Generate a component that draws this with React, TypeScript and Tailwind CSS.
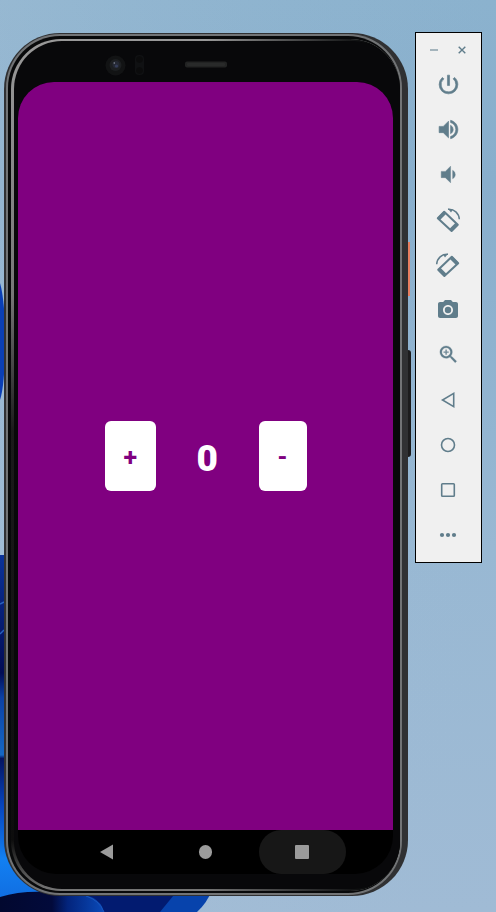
import React from "react";
import { MdPowerSettingsNew, MdVolumeUp, MdVolumeDown, MdCameraAlt, MdZoomIn } from "react-icons/md";

function Wallpaper() {
  return (
    <svg className="absolute inset-0 h-full w-full" viewBox="0 0 496 912" preserveAspectRatio="none">
      <defs>
        <linearGradient id="sky" x1="0" y1="0" x2="0" y2="1">
          <stop offset="0" stopColor="#8bb2ce" />
          <stop offset="0.2" stopColor="#88aecc" />
          <stop offset="0.6" stopColor="#98b8d3" />
          <stop offset="1" stopColor="#a0bbd5" />
        </linearGradient>
        <linearGradient id="glow" x1="0" y1="0" x2="1" y2="0">
          <stop offset="0" stopColor="#b9cbdc" stopOpacity="0.25" />
          <stop offset="1" stopColor="#9bbad4" stopOpacity="0" />
        </linearGradient>
        <linearGradient id="petal" x1="0" y1="555" x2="0" y2="912" gradientUnits="userSpaceOnUse">
          <stop offset="0" stopColor="#0a3399" />
          <stop offset="0.33" stopColor="#020c55" />
          <stop offset="0.4" stopColor="#0b41a4" />
          <stop offset="0.56" stopColor="#1468c4" />
          <stop offset="0.57" stopColor="#031460" />
          <stop offset="0.7" stopColor="#0644bd" />
          <stop offset="0.85" stopColor="#1280f2" />
          <stop offset="1" stopColor="#1068dc" />
        </linearGradient>
        <linearGradient id="fold" x1="0" y1="0" x2="1" y2="0">
          <stop offset="0" stopColor="#02082f" />
          <stop offset="0.5" stopColor="#020a3b" />
          <stop offset="0.65" stopColor="#03247c" />
          <stop offset="1" stopColor="#0a4ab9" />
        </linearGradient>
      </defs>
      <rect width="496" height="912" fill="url(#sky)" />
      <rect width="496" height="912" fill="url(#glow)" />
      <path d="M0 283 Q5 300 5 340 Q5 385 0 400Z" fill="#0a3fb5" />
      <path d="M0 555H5V820L60 890V912H0Z" fill="url(#petal)" />
      <path d="M0 604 L4 602M0 634 L4 630" stroke="#2961bf" strokeWidth="1.5" />
      <path d="M50 890H212Q207 903 197 912H50Z" fill="#0743ac" />
      <path d="M50 890H178L160 912H50Z" fill="#021b70" />
      <path d="M0 897Q25 889 60 893Q99 891 104 912H0Z" fill="url(#fold)" />
      <path d="M86 896Q99 900 104 912" fill="none" stroke="#1857bd" />
    </svg>
  );
}

function RotateIcon({ mirrored = false }: { mirrored?: boolean }) {
  return (
    <svg width="26" height="26" viewBox="0 0 26 26" className={mirrored ? "-scale-x-100" : ""}>
      <path d="M2.8 11.2 9.2 4.8 22.8 17.8 16.6 24Z" fill="none" stroke="#607d8b" strokeWidth="2" strokeLinejoin="round" />
      <path d="M3.8 11.8 9.8 5.8M16 22.8 21.8 17" stroke="#607d8b" strokeWidth="3.4" />
      <path d="M13 2.3C19.2 1.8 24 6.3 24.3 12.3" fill="none" stroke="#607d8b" strokeWidth="1.5" />
      <path d="m13 1.7 5 .8-2 3Z" fill="#607d8b" />
    </svg>
  );
}

const tools = [
  <MdPowerSettingsNew size={25} stroke="currentColor" strokeWidth={0.6} className="[&>path[fill=none]]:hidden" />,
  <MdVolumeUp size={25} stroke="currentColor" strokeWidth={0.6} className="[&>path[fill=none]]:hidden" />,
  <MdVolumeDown size={25} stroke="currentColor" strokeWidth={0.4} className="[&>path[fill=none]]:hidden" />,
  <RotateIcon />,
  <RotateIcon mirrored />,
  <MdCameraAlt size={24} />,
  <MdZoomIn size={23} stroke="currentColor" strokeWidth={0.3} className="[&>path[fill=none]]:hidden" />,
  <svg width="20" height="20" viewBox="0 0 20 20"><path d="M15.7 3.3v13.4L4.5 10Z" fill="none" stroke="#607d8b" strokeWidth="1.6" /></svg>,
  <svg width="20" height="20" viewBox="0 0 20 20"><circle cx="10" cy="10" r="6.5" fill="none" stroke="#607d8b" strokeWidth="1.6" /></svg>,
  <svg width="20" height="20" viewBox="0 0 20 20"><rect x="3.7" y="3.7" width="12.6" height="12.6" rx="0.8" fill="none" stroke="#607d8b" strokeWidth="1.6" /></svg>,
  <svg width="20" height="20" viewBox="0 0 20 20" fill="#607d8b"><circle cx="4" cy="10" r="2.1" /><circle cx="10" cy="10" r="2.1" /><circle cx="16" cy="10" r="2.1" /></svg>,
];

function Toolbar() {
  return (
    <aside className="ml-[8px] flex h-[531px] w-[67px] flex-col border border-black bg-[#f0f0f0] text-[#607d8b]">
      <div className="flex h-[29px] items-center pt-[5px]">
        <span className="ml-[14px] h-[2px] w-[8px] bg-[#a4b4bc]" />
        <svg className="ml-[20px]" width="8" height="8" viewBox="0 0 8 8"><path d="m.7.7 6.6 6.6M7.3.7.7 7.3" stroke="#607d8b" strokeWidth="1.4" /></svg>
      </div>
      {tools.map((icon, i) => (
        <div key={i} className="flex h-[45px] shrink-0 items-center justify-center pr-[1px]">{icon}</div>
      ))}
    </aside>
  );
}

function Camera() {
  return (
    <div className="flex h-[50px] w-full">
      <svg width="404" height="50" viewBox="3 32 404 50">
        <circle cx="115.5" cy="65.5" r="10" fill="#121314" />
        <circle cx="115.5" cy="65" r="6" fill="#1d1f21" />
        <circle cx="116" cy="64.5" r="3.5" fill="#252934" />
        <circle cx="116.5" cy="66" r="1.6" fill="#363e5a" />
        <circle cx="114.3" cy="63" r="0.8" fill="#8c919c" />
        <rect x="135" y="55" width="9" height="20" rx="4" fill="#101113" />
        <circle cx="139.5" cy="59.5" r="3.3" fill="#0b0b0c" />
        <circle cx="139.5" cy="70.5" r="3.3" fill="#0b0b0c" />
        <rect x="185" y="61.5" width="42" height="6" rx="2" fill="#222323" />
        <rect x="187" y="63" width="38" height="3" rx="1" fill="#292a2a" />
      </svg>
    </div>
  );
}

function Phone() {
  return (
    <main className="relative flex h-[864px] w-[404px] flex-col overflow-visible">
      <div className="absolute top-[210px] -right-[3px] h-[54px] w-[6px] bg-[#e77f60]" />
      <div className="absolute top-[318px] -right-[4px] h-[107px] w-[6px] rounded-sm bg-[#1c1c1d]" />
      <div className="absolute top-[0.5px] -right-[0.5px] bottom-0 left-[0.5px] rounded-[56px] bg-[#303133] pt-[1.5px] pr-[5.5px] pb-[1.5px] pl-[2px]">
        <div className="h-full w-full rounded-[54px] bg-[#727476] p-[2px]">
          <div className="h-full w-full rounded-[52px] bg-[#08090a] pt-[2.5px] pb-[2px] pl-[3px]">
            <div className="h-full w-full rounded-[50px] bg-[linear-gradient(180deg,#999_0%,#777_30%,#1a1a1a_46%,#0d0d0d_94%,#777_100%)]">
              <div className="h-full w-full rounded-[50px] bg-[linear-gradient(90deg,transparent_50%,#08090a_92%)] pt-[2.5px] pb-[2px] pl-[3px]">
                <div className="h-full w-full rounded-[48px] bg-[#08080a]" />
              </div>
            </div>
          </div>
        </div>
      </div>
      <div className="relative flex flex-1 flex-col">
        <Camera />
        <section className="ml-[15px] flex h-[792px] w-[375px] flex-col overflow-hidden rounded-t-[36px] rounded-b-[38px] bg-black">
          <div className="flex h-[748px] items-center bg-[#800080] pl-[86.5px] font-['Roboto',sans-serif] font-bold">
            <button className="flex h-[70.5px] w-[51.5px] items-center justify-center rounded-[6px] bg-white pt-[4px] text-[25px] text-[#800080]">+</button>
            <span className="w-[102.5px] pt-[5px] text-center text-[37px] leading-none font-black text-white">0</span>
            <button className="flex h-[70.5px] w-[48px] items-center justify-center rounded-[6px] bg-white pt-[4px] text-[25px] text-[#800080]">-</button>
          </div>
          <nav className="flex h-[44px] items-center">
            <svg className="ml-[82px]" width="13" height="16" viewBox="0 0 13 16"><path d="M13 .5v15L0 8Z" fill="#9b9b9b" /></svg>
            <span className="ml-[85.5px] h-[13.5px] w-[13.5px] rounded-full bg-[#9b9b9b]" />
            <span className="ml-[46.5px] flex h-[44px] w-[87px] items-center justify-center rounded-full bg-[#171717]">
              <span className="h-[14px] w-[14px] rounded-[1px] bg-[#9b9b9b]" />
            </span>
          </nav>
        </section>
      </div>
    </main>
  );
}

export default function App() {
  return (
    <div className="relative h-[912px] w-[496px] overflow-hidden">
      <Wallpaper />
      <div className="relative flex items-start pt-[32px] pl-[3px]">
        <Phone />
        <Toolbar />
      </div>
    </div>
  );
}
